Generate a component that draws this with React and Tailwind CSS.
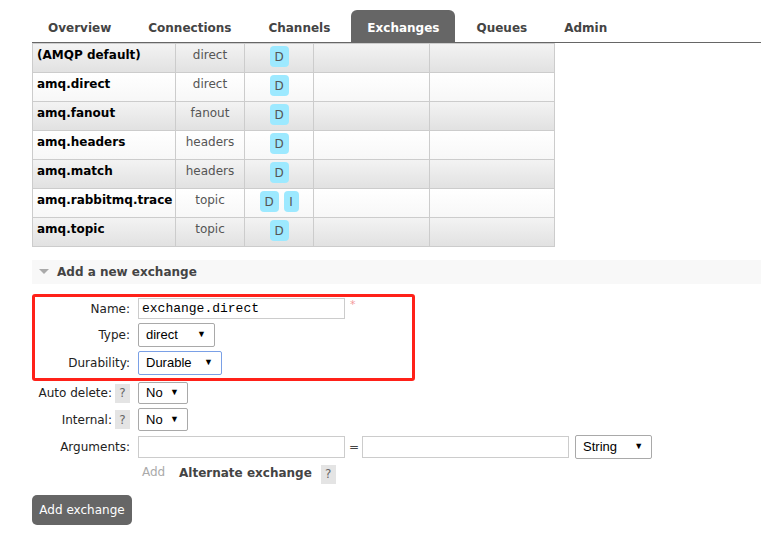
import React from "react";

const tabs = ["Overview", "Connections", "Channels", "Exchanges", "Queues", "Admin"];

const exchanges = [
  { name: "(AMQP default)", type: "direct", features: ["D"] },
  { name: "amq.direct", type: "direct", features: ["D"] },
  { name: "amq.fanout", type: "fanout", features: ["D"] },
  { name: "amq.headers", type: "headers", features: ["D"] },
  { name: "amq.match", type: "headers", features: ["D"] },
  { name: "amq.rabbitmq.trace", type: "topic", features: ["D", "I"] },
  { name: "amq.topic", type: "topic", features: ["D"] },
];

const Help = () => (
  <span className="inline-flex h-[19px] w-[15px] items-center justify-center bg-[#e4e4e4] text-[12px] text-[#666]">?</span>
);

const Select = ({ value, width, focused }) => (
  <div
    className={`flex h-full items-center justify-between rounded-[2px] border bg-white pl-[7px] pr-[8px] text-[13px] text-black ${
      focused ? "border-[#7aa0e6]" : "border-[#a9a9a9]"
    }`}
    style={{ width, fontFamily: '"Liberation Sans", Arial, sans-serif' }}
  >
    <span>{value}</span>
    <span className="text-[9px]">▼</span>
  </div>
);

const TextInput = ({ value, width = 207 }) => (
  <div
    className="flex h-full items-center border border-[#cccccc] bg-white px-[3px] text-[13px] text-black"
    style={{ width, fontFamily: '"Liberation Mono", "Courier New", monospace' }}
  >
    {value}
  </div>
);

// one form line: label column + field
const FormRow = ({ label, help, labelWidth, height, className = "", children }) => (
  <div className={`flex items-center ${className}`} style={{ height }}>
    <div className="flex items-center justify-end gap-[3px] text-[12px] text-[#222]" style={{ width: labelWidth }}>
      <span>{label}</span>
      {help && <Help />}
    </div>
    <div className="ml-[8px] flex h-full items-center">{children}</div>
  </div>
);

export default function App() {
  return (
    <div
      className="h-[535px] w-[761px] overflow-hidden bg-white pl-[32px] pt-[11px]"
      style={{ fontFamily: '"DejaVu Sans", Verdana, sans-serif' }}
    >
      {/* tabs */}
      <div className="flex h-[32px] items-end gap-[5px] border-b border-[#666]">
        {tabs.map((t) => (
          <div
            key={t}
            className={`flex h-[32px] items-center rounded-t-[6px] px-[16px] pt-[4px] text-[12px] font-bold ${
              t === "Exchanges" ? "bg-[#666] text-white" : "text-[#444]"
            }`}
          >
            {t}
          </div>
        ))}
      </div>

      {/* exchanges table */}
      <table className="w-[522px] table-fixed border-collapse text-[12px]">
        <colgroup>
          <col className="w-[143px]" />
          <col className="w-[69px]" />
          <col className="w-[69px]" />
          <col className="w-[116px]" />
          <col className="w-[125px]" />
        </colgroup>
        <tbody>
          {exchanges.map((ex, i) => (
            <tr
              key={ex.name}
              className={`h-[29px] ${
                i % 2 === 0 ? "bg-gradient-to-b from-[#f3f3f3] to-[#e1e1e1]" : "bg-gradient-to-b from-[#ffffff] to-[#f7f7f7]"
              }`}
            >
              <td className="border border-[#cccccc] px-[4px] pt-[4px] align-top font-bold leading-[15px] text-black whitespace-nowrap">
                {ex.name}
              </td>
              <td className="border border-[#cccccc] pt-[4px] text-center align-top leading-[15px] text-[#555]">{ex.type}</td>
              <td className="border border-[#cccccc] pt-[2px] align-top">
                <div className="flex justify-center gap-[5px]">
                  {ex.features.map((f) => (
                    <span
                      key={f}
                      className={`flex h-[21px] items-center justify-center rounded-[4px] bg-[#9de9ff] text-[12px] text-[#555] ${
                        f === "I" ? "w-[15px]" : "w-[19px]"
                      }`}
                    >
                      {f}
                    </span>
                  ))}
                </div>
              </td>
              <td className="border border-[#cccccc]"></td>
              <td className="border border-[#cccccc]"></td>
            </tr>
          ))}
        </tbody>
      </table>

      {/* section header */}
      <div className="mt-[13px] flex h-[24px] items-center bg-[#f8f8f8] pl-[7px]">
        <svg width="10" height="6" viewBox="0 0 10 6" className="mr-[8px]">
          <polygon points="0,0 10,0 5,5" fill="#aaaaaa" />
        </svg>
        <span className="text-[12px] font-bold text-[#444]">Add a new exchange</span>
      </div>

      {/* form */}
      <div className="mt-[10px] w-[383px] rounded-[3px] border-[3px] border-[#ff2119] pt-[1px] pb-[3px]">
        <FormRow label="Name:" labelWidth={95} height={21}>
          <TextInput value="exchange.direct" />
          <span className="ml-[5px] self-start text-[11px] leading-[14px] text-[#f49a9a]">*</span>
        </FormRow>
        <FormRow label="Type:" labelWidth={95} height={24} className="mt-[4px]">
          <Select value="direct" width={77} />
        </FormRow>
        <FormRow label="Durability:" labelWidth={95} height={24} className="mt-[4px]">
          <Select value="Durable" width={84} focused />
        </FormRow>
      </div>

      <FormRow label="Auto delete:" help labelWidth={98} height={22} className="mt-[1px]">
        <Select value="No" width={50} />
      </FormRow>
      <FormRow label="Internal:" help labelWidth={98} height={23} className="mt-[4px]">
        <Select value="No" width={50} />
      </FormRow>
      <FormRow label="Arguments:" labelWidth={98} height={24} className="mt-[4px]">
        <div className="flex h-[22px] items-center">
          <TextInput value="" />
          <span className="ml-[4px] mr-[3px] text-[12px] text-[#444]">=</span>
          <TextInput value="" />
        </div>
        <div className="ml-[6px] h-[24px]">
          <Select value="String" width={77} />
        </div>
      </FormRow>

      <div className="mt-[4px] flex h-[20px] items-center pl-[110px]">
        <span className="w-[37px] self-start text-[12px] text-[#aaa]">Add</span>
        <span className="text-[12px] font-bold text-[#444]">Alternate exchange</span>
        <span className="ml-[9px]">
          <Help />
        </span>
      </div>

      <button className="mt-[12px] flex h-[30px] w-[100px] items-center justify-center rounded-[5px] bg-[#666] text-[12px] text-white">
        Add exchange
      </button>
    </div>
  );
}
